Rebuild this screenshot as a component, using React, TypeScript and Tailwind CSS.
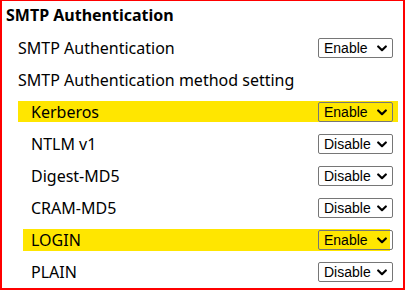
import React from 'react';

type Method = {
  name: string;
  value: 'Enable' | 'Disable';
  highlight?: 'wide' | 'narrow';
};

const methods: Method[] = [
  { name: 'Kerberos', value: 'Enable', highlight: 'wide' },
  { name: 'NTLM v1', value: 'Disable' },
  { name: 'Digest-MD5', value: 'Disable' },
  { name: 'CRAM-MD5', value: 'Disable' },
  { name: 'LOGIN', value: 'Enable', highlight: 'narrow' },
  { name: 'PLAIN', value: 'Disable' },
];

function FakeSelect({ value }: { value: string }) {
  return (
    <div className="relative z-10 flex items-center justify-between w-[75px] h-[20px] border border-[#767676] rounded-[2px] pl-[5px] pr-[5px] text-[14px] leading-none text-black font-['Liberation_Sans',Arial,sans-serif]">
      <span>{value}</span>
      <svg width="10" height="7" viewBox="0 0 10 7" fill="none">
        <path d="M1.2 1.5 L5 5.2 L8.8 1.5" stroke="#000" strokeWidth="2.2" strokeLinecap="round" strokeLinejoin="round" />
      </svg>
    </div>
  );
}

export default function App() {
  return (
    <div className="w-[407px] h-[291px] bg-white">
      <div className="w-[405px] h-[290px] border-x-2 border-b-2 border-t border-[#ff0000] font-['Noto_Sans',sans-serif] text-black">
        {/* Title */}
        <div className="h-[31px] pl-[4px] pt-[3px] text-[16px] font-bold leading-[22px]">
          SMTP Authentication
        </div>

        {/* Main setting */}
        <div className="flex items-center justify-between h-[32px] pl-[16px] pr-[10px]">
          <span className="text-[16px] leading-none">SMTP Authentication</span>
          <FakeSelect value="Enable" />
        </div>

        <div className="flex items-center h-[32px] pl-[16px]">
          <span className="text-[16px] leading-none">SMTP Authentication method setting</span>
        </div>

        {/* Methods */}
        {methods.map((m) => (
          <div key={m.name} className="relative flex items-center justify-between h-[32px] pl-[29px] pr-[10px]">
            {m.highlight === 'wide' && (
              <div className="absolute left-[16px] right-[5px] top-[5px] h-[21px] bg-[#ffe600]" />
            )}
            {m.highlight === 'narrow' && (
              <div className="absolute left-[21px] right-[13px] top-[5px] h-[22px] bg-[#ffe600]" />
            )}
            <span className="relative z-10 text-[16px] leading-none">{m.name}</span>
            <FakeSelect value={m.value} />
          </div>
        ))}
      </div>
    </div>
  );
}
